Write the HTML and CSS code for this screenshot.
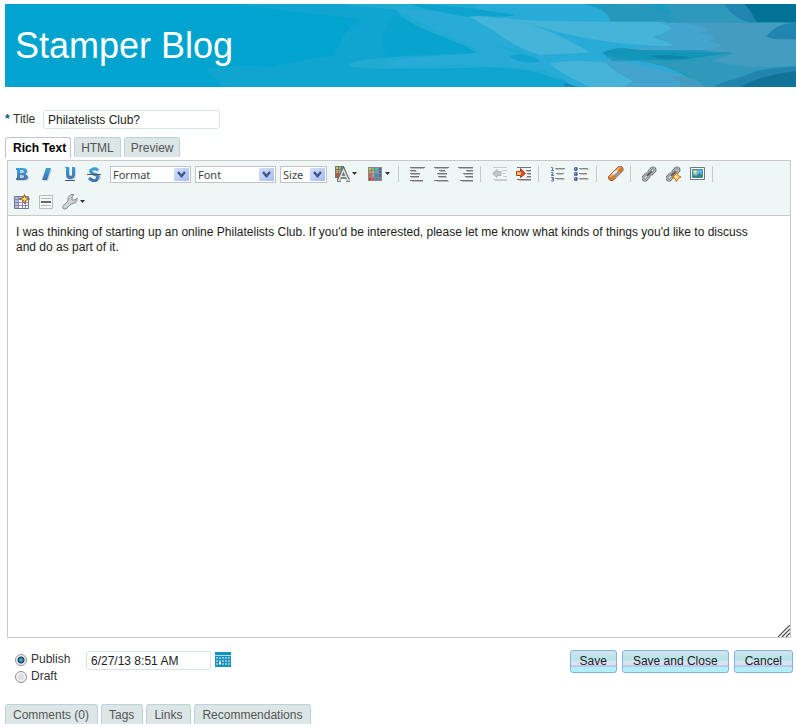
FILE: index.html
```
<!DOCTYPE html>
<html lang="en">
<head>
	<meta charset="utf-8">
	<meta name="viewport" content="width=device-width">
	<title>Stamper Blog</title>
	<link rel="stylesheet" href="styles.css">
</head>
<body>

<header class="banner">
	<svg class="banner-art" viewBox="0 0 791 83" preserveAspectRatio="xMaxYMid slice" aria-hidden="true">
		<g transform="translate(391 -4) scale(.33333)">
			<path fill="#10a5d0" d="M-480 12C-420 25-250 40-100 58C-160 90-170 130-185 165C-250 175-330 190-370 200C-440 195-520 200-570 203C-550 225-540 245-510 261H640V12Z"/>
			<path fill="#20abd0" d="M-160 12C-110 22-60 22 10 30L120 48L300 12ZM-140 190C-80 172 0 172 260 160L320 200C160 205-60 212-140 200Z"/>
			<path fill="#08a4cf" d="M0 45C70 85 190 125 240 157C160 160 60 165-20 170C-60 150-40 80 0 45Z"/>
			<path fill="#20abd0" d="M0 25C40 95 180 110 240 158L130 175L500 240L540 261H620V90L300 60L200 55Z"/>
			<path fill="#29abd8" d="M0 25C110 30 160 45 215 50L330 48C380 48 360 40 280 36C240 28 210 15 250 12H1000V261H530C480 210 400 200 300 200C180 190 80 200 -30 200V182C60 170 150 166 250 161C240 130 90 90 0 25Z"/>
			<path fill="#0ca4cf" d="M45 12C180 15 260 30 350 45C310 58 250 40 200 42C150 40 80 28 45 12Z"/>
			<path fill="#10a4d0" d="M280 203C400 205 465 220 515 261H260ZM340 168C380 155 430 170 432 185C400 193 350 183 340 168Z"/>
			<path fill="#20abd0" d="M300 133C350 145 400 160 430 174C390 164 340 165 300 133Z"/>
			<path fill="#2598bc" d="M570 12H1200V70H640C650 50 620 25 570 12ZM680 145H1200V261H900C880 220 800 190 720 183H650C610 165 630 145 680 145Z"/>
			<path fill="#189bc0" d="M570 12C600 24 640 28 650 12ZM740 12H800C820 22 840 35 845 48C800 35 775 20 740 12Z"/>
			<path fill="#2e99ba" d="M800 12H1000L1070 70H850C835 50 820 25 800 12ZM720 180L1000 160L1200 190V261H920C880 220 820 195 720 180Z"/>
			<path fill="#44b4d8" d="M220 50L250 48L430 63L630 65H800C850 75 840 90 770 110C810 125 840 132 830 138C700 140 560 120 400 72C480 100 530 125 580 157C530 163 480 162 430 165C370 145 330 120 290 90Z"/>
			<path fill="#43a4cf" d="M780 68H1000V150H750C690 148 640 142 830 138C840 132 810 125 780 110C830 90 850 80 780 68ZM600 183L690 186C780 205 900 230 922 261H680Z"/>
			<path fill="#44b4d8" d="M462 190C520 178 590 183 630 190C650 215 700 235 710 245L680 261H582C540 240 480 215 462 190Z"/>
			<path fill="#449cc0" d="M850 68H1200V195C1130 205 1040 205 948 184C970 172 1000 165 1010 158L920 152C990 145 990 130 935 125C970 112 950 105 910 100C960 85 920 76 850 68ZM820 230C870 225 910 240 924 261H850C865 250 850 240 820 230Z"/>
			<path fill="#1195b8" d="M620 160C630 145 690 142 720 150L1010 160C930 165 900 180 820 182C730 180 650 180 620 160Z"/>
			<path fill="#0d85a8" d="M765 170C790 162 840 165 885 173C840 180 800 178 765 170Z"/>
			<path fill="#2185b0" d="M985 12H1060L1090 68H1062C1030 60 1000 40 985 12ZM1110 110C1125 90 1150 68 1200 68V118C1170 116 1140 122 1110 110ZM955 261C980 240 1040 235 1080 213C1120 205 1160 202 1200 200V261Z"/>
			<path fill="#007296" d="M1045 12H1200V67H1085C1070 50 1065 30 1045 12Z"/>
			<path fill="#117398" d="M1035 261C1060 240 1140 220 1200 213V261Z"/>
			<path fill="#128cb0" d="M505 261V248L545 261Z"/>
		</g>
	</svg>
	<h1>Stamper Blog</h1>
</header>

<form class="entry">
	<div class="title-row">
		<span class="required">*</span>
		<label for="title">Title</label>
		<input type="text" class="field" id="title" value="Philatelists Club?">
	</div>

	<div class="tabs">
		<button type="button" class="tab active">Rich Text</button>
		<button type="button" class="tab">HTML</button>
		<button type="button" class="tab">Preview</button>
	</div>

	<div class="editor">
		<div class="toolbar">
			<div class="tool-row">
				<button type="button" class="tool" aria-label="Bold"><svg width="16" height="16" viewBox="0 0 16 16"><path class="shade" transform="translate(1 1)" d="M2 2h7q4 0 4 3 0 2-2 3 3 1 3 3 0 3-5 3H2v-2h1V4H2z"/><path fill="url(#blue)" fill-rule="evenodd" d="M2 2h7q4 0 4 3 0 2-2 3 3 1 3 3 0 3-5 3H2v-2h1V4H2zM6 4v3h2q2 0 2-1.500T8 4zm0 5v3h2q2 0 2-1.500T8 9z"/></svg></button>
				<button type="button" class="tool" aria-label="Italic"><svg width="16" height="16" viewBox="0 0 16 16"><path class="shade" d="M9 3h5l-4 12H5z"/><path fill="url(#blue)" d="M8 2h5L9 14H4z"/></svg></button>
				<button type="button" class="tool" aria-label="Underline"><svg width="16" height="16" viewBox="0 0 16 16"><path class="shade" d="M4 2h4v7q1 2 3 0V2h3v8q-1 4-5 4-4 0-5-4z"/><path fill="url(#blue)" d="M3 1h4v7q0 2 2 2 1 0 1-2V1h3v7q0 5-5 5Q4 13 4 8V2H3z"/><path stroke="#555" d="M3 14.500h10"/></svg></button>
				<button type="button" class="tool" aria-label="Strike through"><svg width="16" height="16" viewBox="0 0 16 16"><path fill="none" stroke="#c4d2dc" stroke-width="3" d="M13 5Q9 2 6 4t1 4 6 3-2 3-7-1"/><path fill="none" stroke="url(#blue)" stroke-width="3" d="M12 4Q9 2 6 3.500T6 7t5 2 0 4-8-1"/><path stroke="#555" d="M1 8.500h14"/></svg></button>

				<span class="combo combo-wide">
					<select aria-label="Format"><option>Format</option></select>
					<svg class="combo-arrow" width="15" height="13" viewBox="0 0 15 13"><rect width="15" height="13" rx="1" fill="url(#arrow)"/><path fill="none" stroke="#405a84" stroke-width="2.500" d="M4 4l3.500 4L11 4"/></svg>
				</span>
				<span class="combo combo-wide">
					<select aria-label="Font"><option>Font</option></select>
					<svg class="combo-arrow" width="15" height="13" viewBox="0 0 15 13"><rect width="15" height="13" rx="1" fill="url(#arrow)"/><path fill="none" stroke="#405a84" stroke-width="2.500" d="M4 4l3.500 4L11 4"/></svg>
				</span>
				<span class="combo">
					<select aria-label="Size"><option>Size</option></select>
					<svg class="combo-arrow" width="15" height="13" viewBox="0 0 15 13"><rect width="15" height="13" rx="1" fill="url(#arrow)"/><path fill="none" stroke="#405a84" stroke-width="2.500" d="M4 4l3.500 4L11 4"/></svg>
				</span>

				<button type="button" class="tool tool-menu" aria-label="Text color"><svg width="16" height="16" viewBox="0 0 16 16"><path fill="#777" d="M1 0h9v12H1z"/><path fill="#e8b840" d="M2 1h2v2H2z"/><path fill="#78c860" d="M5 1h2v2H5z"/><path fill="#50c890" d="M8 1h2v2H8z"/><path fill="#f09030" d="M2 4h2v3H2z"/><path fill="#88b8a0" d="M5 4h2v3H5z"/><path fill="#e84030" d="M2 8h2v3H2z"/><path fill="none" stroke="#666" stroke-width="3.500" d="M5 14L9.500 3.500l4.500 10.500M7 11h5M3 14h4M12 14h4"/><path fill="none" stroke="#dfe5e5" stroke-width="1.600" d="M5 14L9.500 4 14 14M7 10.500h5M4 14h3M12 14h4"/></svg><svg class="caret" width="5" height="3" viewBox="0 0 5 3"><path d="M0 0h5L2.500 3z"/></svg></button>
				<button type="button" class="tool tool-menu" aria-label="Background color"><svg width="16" height="16" viewBox="0 0 16 16"><path fill="#888" d="M1 1h14v14H1z"/><path fill="#e8b840" d="M2 2h2v2H2z"/><path fill="#70c870" d="M5 2h2v2H5z"/><path fill="#50b8b0" d="M8 2h3v2H8z"/><path fill="#3878c0" d="M12 2h2v2h-2z"/><path fill="#f09030" d="M2 5h2v2H2z"/><path fill="#b8c080" d="M5 5h2v2H5z"/><path fill="#48b0d8" d="M8 5h3v2H8z"/><path fill="#3868b0" d="M12 5h2v2h-2z"/><path fill="#e86030" d="M2 8h2v3H2z"/><path fill="#d09090" d="M5 8h2v3H5z"/><path fill="#3890c8" d="M8 8h3v3H8z"/><path fill="#5068b0" d="M12 8h2v3h-2z"/><path fill="#f03020" d="M2 12h2v2H2z"/><path fill="#d05080" d="M5 12h2v2H5z"/><path fill="#5088c0" d="M8 12h3v2H8z"/><path fill="#8078b0" d="M12 12h2v2h-2z"/></svg><svg class="caret" width="5" height="3" viewBox="0 0 5 3"><path d="M0 0h5L2.500 3z"/></svg></button>
				<span class="separator"></span>

				<button type="button" class="tool" aria-label="Align left"><svg width="16" height="16" viewBox="0 0 16 16"><path stroke="#74747a" d="M0 1.500h15M0 4.500h6M0 7.500h10M0 10.500h9M0 14.500h13"/><path stroke="#bbb" d="M1 2.500h13M1 5.500h6M1 8.500h9M1 11.500h8M2 15.500h11"/></svg></button>
				<button type="button" class="tool" aria-label="Align center"><svg width="16" height="16" viewBox="0 0 16 16"><path stroke="#74747a" d="M0 1.500h15M5 4.500h6M3 7.500h10M4 10.500h8M0 14.500h14"/><path stroke="#bbb" d="M1 2.500h13M6 5.500h6M4 8.500h9M5 11.500h8M3 15.500h12"/></svg></button>
				<button type="button" class="tool" aria-label="Align right"><svg width="16" height="16" viewBox="0 0 16 16"><path stroke="#74747a" d="M0 1.500h15M8 4.500h7M5 7.500h10M7 10.500h8M2 14.500h13"/><path stroke="#bbb" d="M1 2.500h14M9 5.500h6M6 8.500h9M8 11.500h7M4 15.500h11"/></svg></button>
				<span class="separator"></span>

				<button type="button" class="tool" aria-label="Outdent"><svg width="16" height="16" viewBox="0 0 16 16"><path stroke="#c8cdcf" d="M1 1.500h14M10 4.500h5M11 7.500h3M11 10.500h4M1 13.500h14M3 14.500h12"/><path fill="#c4c7c8" stroke="#b4b7b8" d="M.500 7.500L5 3.500v2h4v4H5v2z"/></svg></button>
				<button type="button" class="tool" aria-label="Indent"><svg width="16" height="16" viewBox="0 0 16 16"><path stroke="#74747a" d="M1 1.500h14M10 4.500h5M11 7.500h4M11 10.500h4M1 13.500h14"/><path stroke="#bbb" d="M11 5.500h4M12 8.500h3M10 11.500h5M3 14.500h12"/><path fill="#f04030" stroke="#a04020" d="M.500 5.500h4v-3l5 5-5 4v-2h-4z"/><path fill="#f8c860" d="M1 6h4v3H1z"/></svg></button>
				<span class="separator"></span>

				<button type="button" class="tool" aria-label="Numbered list"><svg width="16" height="16" viewBox="0 0 16 16"><path fill="none" stroke="#6570a8" d="M1 1.500h1.500v3M1 4.500h3M1 6.500h2v2H1.500v1H4M1 11.500h2.500v1.500H2h1.500v2H1"/><path stroke="#8c8880" d="M5 2.500h10M6 7.500h8M5 12.500h9"/><path stroke="#c4c4c0" d="M6 3.500h8M7 8.500h6M6 13.500h9"/></svg></button>
				<button type="button" class="tool" aria-label="Bulleted list"><svg width="16" height="16" viewBox="0 0 16 16"><path fill="#5565a5" d="M0 2l1-1h2l1 2-1 2H1L0 4zm0 5l1-1h2l1 2-1 2H1L0 9zm0 5l1-1h2l1 2-1 2H1l-1-1z"/><path fill="#a8b4e0" d="M1 2h1v1H1zm0 5h1v1H1zm0 5h1v1H1z"/><path stroke="#8c8880" d="M5 2.500h9M5 7.500h8M5 12.500h9"/><path stroke="#c4c4c0" d="M6 3.500h9M6 8.500h7M6 13.500h9"/></svg></button>
				<span class="separator"></span>

				<button type="button" class="tool" aria-label="Remove format"><svg width="16" height="16" viewBox="0 0 16 16"><path fill="#d87828" stroke="#906050" d="M10.500.500h3l1.500 2v2l-10 10H2L.500 12.500v-2z"/><path fill="#f8b470" d="M1 10.500L11 1h2L3 11.500z"/><path fill="#eee" d="M4 7.500L8 4l2 1.500L6 9z"/><path fill="#999" d="M6 9l4-3.500 2 2.500-4 4z"/></svg></button>
				<span class="separator"></span>

				<button type="button" class="tool" aria-label="Link"><svg width="16" height="16" viewBox="0 0 16 16"><use href="#chain"/></svg></button>
				<button type="button" class="tool" aria-label="Insert bookmark"><svg width="16" height="16" viewBox="0 0 16 16"><use href="#chain"/><path fill="#ffe878" stroke="#c86420" d="M10.500 6.500l1.500 3 3 1.500-3 1.500-1.500 3-1.500-3-3-1.500 3-1.500z"/></svg></button>
				<button type="button" class="tool" aria-label="Image"><svg width="16" height="16" viewBox="0 0 16 16"><path fill="#fff" stroke="#777" d="M.500 1.500h14v12H.500z"/><path fill="#62b8e8" stroke="#3888b0" d="M2.500 3.500h10v8h-10z"/><circle cx="5" cy="6" r="1.700" fill="#ffe860"/><path fill="#388870" d="M3 11V9l3 1 4-3 2 2v2z"/></svg></button>
				<span class="separator"></span>
			</div>

			<div class="tool-row">
				<button type="button" class="tool" aria-label="Table"><svg width="16" height="16" viewBox="0 0 16 16"><path fill="#fff" stroke="#7070a0" d="M.500 2.500h14v12H.500z"/><path fill="#b8b8e0" d="M1 3h13v2H1zM1 5h3v9H1z"/><path fill="none" stroke="#8888b8" d="M.500 5.500h14M.500 8.500h14M.500 11.500h14M4.500 2.500v12M8.500 2.500v12M11.500 2.500v12"/><path fill="#ffe050" stroke="#a85820" d="M10.500.500l1 3 4 1.500-4 1.500-1 3-1-3-4-1.500 4-1.500z"/></svg></button>
				<button type="button" class="tool" aria-label="Horizontal line"><svg width="16" height="16" viewBox="0 0 16 16"><path fill="#f4f6f6" stroke="#bbb" d="M1.500 1.500h13v13h-13z"/><path stroke="#b4b8b8" d="M3 4.500h10M3 11.500h10"/><path stroke="#646a6a" stroke-width="2" d="M3 8h10"/></svg></button>
				<button type="button" class="tool tool-menu" aria-label="Tools"><svg width="16" height="16" viewBox="0 0 16 16"><path fill="#d0d4d4" stroke="#888" d="M.500 12.500L6 7q-1-4 3-6.500h3L10 3v3h3l2-2q1 5-6 6l-5 5H1.500z"/></svg><svg class="caret" width="5" height="3" viewBox="0 0 5 3"><path d="M0 0h5L2.500 3z"/></svg></button>
			</div>
		</div>

		<textarea class="content" aria-label="Content">I was thinking of starting up an online Philatelists Club. If you'd be interested, please let me know what kinds of things you'd like to discuss and do as part of it.</textarea>
		<svg class="grip" width="12" height="12" viewBox="0 0 12 12"><path stroke="#444" stroke-width="1.200" d="M0 12L12 0M4 12l8-8M8 12l4-4"/></svg>
	</div>

	<div class="footer">
		<div class="publish">
			<div class="choices">
				<label><input type="radio" name="state" checked>Publish</label>
				<label><input type="radio" name="state">Draft</label>
			</div>
			<input type="text" class="field" id="date" aria-label="Publish date" value="6/27/13 8:51 AM">
			<button type="button" class="calendar" aria-label="Pick a date"><svg width="16" height="16" viewBox="0 0 16 16"><path fill="#1094bc" d="M0 0h16v15H0z"/><path stroke="#fff" stroke-opacity=".7" d="M0 3.500h16"/><path stroke="#8cbcd8" stroke-width="2" stroke-dasharray="2 1" d="M1 6h14M1 9h14M1 12h14"/><path fill="#fff" d="M4 10h2v2H4z"/></svg></button>
		</div>
		<div class="actions">
			<button type="button" class="action">Save</button>
			<button type="button" class="action">Save and Close</button>
			<button type="button" class="action">Cancel</button>
		</div>
	</div>

	<div class="tabs tabs-bottom">
		<button type="button" class="tab">Comments (0)</button>
		<button type="button" class="tab">Tags</button>
		<button type="button" class="tab">Links</button>
		<button type="button" class="tab">Recommendations</button>
	</div>
</form>

<!-- shared by the toolbar icons -->
<svg class="defs" width="0" height="0" aria-hidden="true">
	<defs>
		<linearGradient id="blue" x1="0" y1="0" x2="0" y2="1"><stop offset="0" stop-color="#38a4d8"/><stop offset="1" stop-color="#4470ac"/></linearGradient>
		<linearGradient id="arrow" x1="0" y1="0" x2="1" y2="1"><stop offset="0" stop-color="#d4e0fc"/><stop offset="1" stop-color="#a8bcf4"/></linearGradient>
		<g id="chain" fill="none">
			<rect x="-3.500" y="-2" width="7" height="4" rx="2" transform="translate(10 5) rotate(-45)" stroke="#666" stroke-width="2.600"/>
			<rect x="-3.500" y="-2" width="7" height="4" rx="2" transform="translate(4 11) rotate(-45)" stroke="#666" stroke-width="2.600"/>
			<rect x="-3.500" y="-2" width="7" height="4" rx="2" transform="translate(10 5) rotate(-45)" stroke="#ccd2d2"/>
			<rect x="-3.500" y="-2" width="7" height="4" rx="2" transform="translate(4 11) rotate(-45)" stroke="#ccd2d2"/>
			<path stroke="#555" stroke-width="1.500" d="M5 10l5-5"/>
		</g>
	</defs>
</svg>

</body>
</html>
```
FILE: styles.css
```
body {
	margin: 4px 0 0 5px;
	background: white;
	color: #333;
	font: 12px/15px "Liberation Sans", Arial, sans-serif;
}
button, input, select, textarea {
	box-sizing: border-box;
	margin: 0;
	font: inherit;
	color: inherit;
}
button {
	padding: 0;
	border: 0;
	background: none;
}
svg {
	display: block;
}

/* banner */

.banner {
	position: relative;
	height: 83px;
	background: #00a4cf;
	overflow: hidden;
}
.banner-art {
	position: absolute;
	top: 0;
	right: 0;
	width: 100%;
	height: 100%;
}
h1 {
	position: relative;
	margin: 0;
	padding-left: 10px;
	line-height: 83px;
	font-size: 36px;
	font-weight: normal;
	color: white;
}

/* title and tabs */

.title-row {
	display: flex;
	align-items: center;
	margin-top: 23px;
}
.required {
	width: 8px;
	color: #006284;
	font-weight: bold;
}
.title-row label {
	width: 30px;
}
.field {
	height: 19px;
	padding: 0 4px;
	border: 1px solid #d8e4e6;
	border-radius: 3px;
	background: white;
	color: #222;
}
#title {
	width: 177px;
}
#date {
	width: 125px;
}

.tabs {
	display: flex;
	align-items: flex-start;
	gap: 3px;
	margin-top: 8px;
	height: 23px;
}
.tab {
	height: 20px;
	padding: 1px 6px 0;
	border: 1px solid #bdd3da;
	border-bottom: 0;
	border-radius: 3px 3px 0 0;
	background: #dce6e6;
	color: #555;
}
.tab.active {
	height: 21px;
	padding: 0 4px 0 7px;
	border-color: #c4c4d0;
	background: white;
	color: black;
	font-weight: bold;
}
.tabs-bottom {
	margin-top: 19px;
}
.tabs-bottom .tab {
	padding: 1px 8px 0 7px;
}

/* editor */

.editor {
	position: relative;
	margin: 0 5px 0 2px;
	border: 1px solid #c9c9c9;
}
.toolbar {
	display: flex;
	flex-direction: column;
	gap: 2px;
	padding-left: 3px;
	border-bottom: 1px solid #c9c9c9;
	background: #eef7f6;
}
.tool-row {
	display: flex;
	align-items: center;
	height: 26px;
}
.tool {
	display: flex;
	flex: none;
	align-items: center;
	width: 24px;
	height: 24px;
	padding: 0 3px;
}
.tool-menu {
	width: 33px;
	gap: 2px;
}
.shade {
	fill: #c4d2dc;
}
.caret {
	flex: none;
	margin-bottom: 2px;
	fill: #333;
}
.separator {
	flex: none;
	width: 1px;
	height: 16px;
	margin: 0 8px 0 1px;
	background: #c9c9c9;
}
.combo {
	position: relative;
	flex: none;
	width: 47px;
	margin: 1px 4px 0 0;
}
.combo-wide {
	width: 81px;
}
.tool + .combo {
	margin-left: 3px;
}
.combo select {
	display: block;
	width: 100%;
	height: 17px;
	padding: 0 2px;
	border: 1px solid #c4c4c4;
	background: white;
	color: #444;
	font: 11px/15px "Noto Sans", Tahoma, sans-serif;
	appearance: none;
}
.combo-arrow {
	position: absolute;
	top: 2px;
	right: 2px;
	pointer-events: none;
}
.content {
	display: block;
	width: 100%;
	height: 421px;
	padding: 9px 20px 8px 8px;
	border: 0;
	background: white;
	color: #222;
	resize: none;
}
.grip {
	position: absolute;
	right: 0;
	bottom: 0;
}

/* publish options and buttons */

.footer {
	display: flex;
	justify-content: space-between;
	align-items: flex-start;
	margin: 12px 3px 0 10px;
}
.publish {
	display: flex;
	align-items: flex-start;
	padding-top: 1px;
}
.choices {
	width: 71px;
}
.choices label {
	display: flex;
	align-items: center;
	gap: 4px;
	height: 17px;
	line-height: 17px;
}
input[type="radio"] {
	width: 12px;
	height: 12px;
	border: 1px solid #8c9094;
	border-radius: 50%;
	background: radial-gradient(circle, #ddd 2px, #f8f8f8 5px);
	appearance: none;
}
input[type="radio"]:checked {
	background: radial-gradient(circle, #48b0d8 1px, #103850 3px, #f0f4f8 4px);
}
.calendar {
	margin: 1px 0 0 4px;
}
.actions {
	display: flex;
	gap: 5px;
}
.action {
	height: 23px;
	padding: 0 9px 1px;
	border: 1px solid #8ab2d8;
	border-radius: 3px;
	background: linear-gradient(#cce4ee 4px, #b9e5eb 4px 10px, #dce3ef 10px 14px, #bcc8f0 14px 16px, #b2eff8 16px);
	color: #222;
}
.action + .action {
	padding: 0 10px 1px;
}
```
